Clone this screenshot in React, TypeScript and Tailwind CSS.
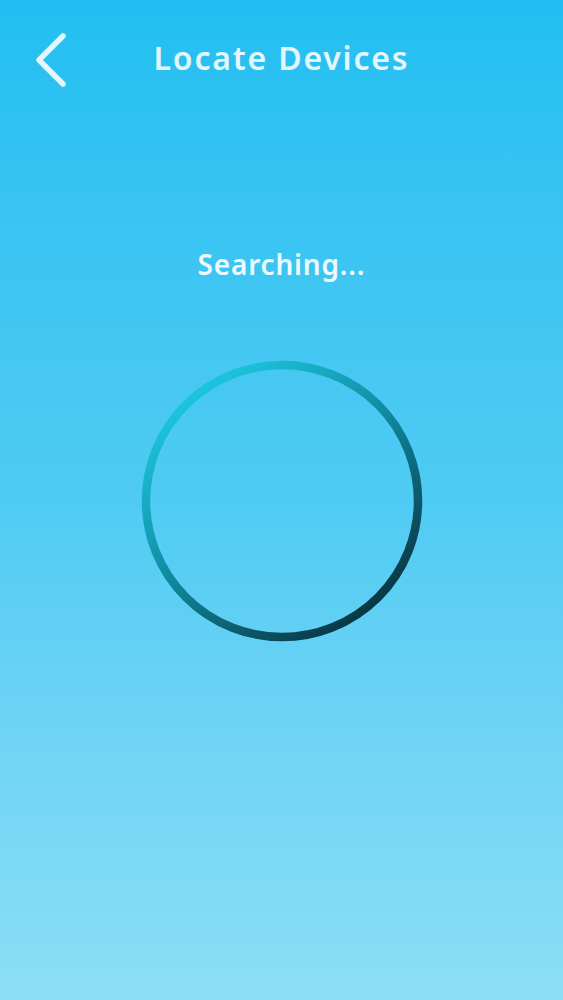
import React from 'react';

const App: React.FC = () => {
  return (
    <div
      className="w-[563px] h-[1000px] overflow-hidden flex flex-col items-center bg-gradient-to-b from-[#20bff1] via-[#4fcbf3] to-[#8cdef6]"
      style={{ fontFamily: '"Noto Sans", "Open Sans", sans-serif' }}
    >
      {/* Header */}
      <div className="relative w-full h-[116px] flex items-center justify-center">
        <button className="absolute left-[30px] top-[29px] w-[42px] h-[60px] flex items-center justify-center">
          <svg width="36" height="56" viewBox="0 0 36 56" fill="none">
            <path
              d="M30 5 L6 29 L30 53"
              stroke="#e3f6fd"
              strokeWidth="5.5"
              strokeLinecap="round"
              strokeLinejoin="round"
            />
          </svg>
        </button>
        <h1 className="text-[32px] font-semibold tracking-[1.8px] text-[#e3f6fd]">Locate Devices</h1>
      </div>

      {/* Status */}
      <p className="mt-[127px] text-[28px] font-semibold tracking-[0.8px] text-[#eef9fe]">Searching...</p>

      {/* Ring */}
      <div className="mt-[75px]">
        <svg width="282" height="282" viewBox="0 0 282 282">
          <defs>
            <linearGradient id="ring" x1="0.2" y1="0.1" x2="0.85" y2="0.95">
              <stop offset="0" stopColor="#1cc3dc" />
              <stop offset="0.45" stopColor="#10899e" />
              <stop offset="1" stopColor="#082f3c" />
            </linearGradient>
          </defs>
          <circle cx="141" cy="141" r="136" fill="none" stroke="url(#ring)" strokeWidth="8.5" />
        </svg>
      </div>
    </div>
  );
};

export default App;
